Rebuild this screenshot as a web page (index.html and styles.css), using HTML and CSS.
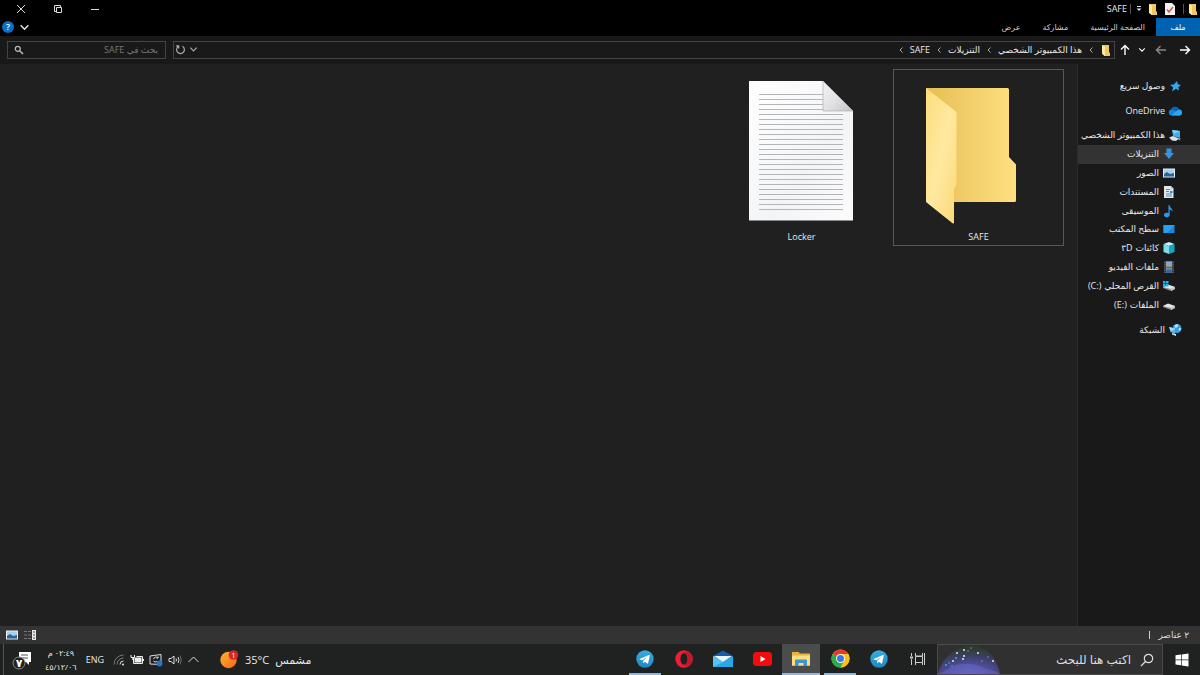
FILE: index.html
```html
<!DOCTYPE html>
<html lang="ar" dir="rtl">
<head>
    <meta charset="UTF-8">
    <meta name="viewport" content="width=device-width, initial-scale=1.0">
    <title>SAFE</title>
    <link rel="stylesheet" href="styles.css">
</head>
<body>
    <svg class="defs" aria-hidden="true">
        <defs>
            <linearGradient id="folder-back" x1="0" y1="0" x2="1" y2="0">
                <stop offset="0" stop-color="#e6bd52"/>
                <stop offset=".4" stop-color="#f0cc66"/>
                <stop offset="1" stop-color="#fedf80"/>
            </linearGradient>
            <linearGradient id="folder-front" x1="0" y1="0" x2="1" y2="1">
                <stop offset="0" stop-color="#fddd7c"/>
                <stop offset=".5" stop-color="#ffe9a0"/>
                <stop offset="1" stop-color="#fbd878"/>
            </linearGradient>
            <linearGradient id="paper" x1="0" y1="0" x2="1" y2="1">
                <stop offset="0" stop-color="#ffffff"/>
                <stop offset=".6" stop-color="#f3f4f6"/>
                <stop offset="1" stop-color="#fbfbfc"/>
            </linearGradient>
            <linearGradient id="fold" x1="0" y1="0" x2="1" y2="1">
                <stop offset="0" stop-color="#f2f2f3"/>
                <stop offset=".5" stop-color="#e3e3e5"/>
                <stop offset="1" stop-color="#c4c4c6"/>
            </linearGradient>
            <linearGradient id="sun" x1="0" y1="0" x2="1" y2="1">
                <stop offset="0" stop-color="#ffb52e"/>
                <stop offset="1" stop-color="#f4661b"/>
            </linearGradient>
            <linearGradient id="sky" x1="0" y1="0" x2="0" y2="1">
                <stop offset="0" stop-color="#37aee2"/>
                <stop offset="1" stop-color="#1e88c0"/>
            </linearGradient>
            <radialGradient id="glow" cx=".5" cy="1" r=".9">
                <stop offset="0" stop-color="#6d63c8"/>
                <stop offset=".45" stop-color="#4a4a92"/>
                <stop offset=".75" stop-color="#3f3f68" stop-opacity=".85"/>
                <stop offset="1" stop-color="#2f5b45" stop-opacity=".2"/>
            </radialGradient>
            <pattern id="rules" width="84" height="5" patternUnits="userSpaceOnUse">
                <path d="M0 2.500h84" stroke="#b4b5b8"/>
            </pattern>
            <symbol id="i-folder" viewBox="0 0 12 14">
                <path d="M2 2h7v7l1 1v3H4z" fill="#f0ca60"/>
                <path d="M2 2l3 2v9l-3-2z" fill="#ffe9a4"/>
            </symbol>
            <symbol id="i-chevron" viewBox="0 0 10 10">
                <path d="M1.500 3l3.500 3.500L8.500 3" fill="none" stroke="currentColor" stroke-width="1.300"/>
            </symbol>
            <symbol id="i-crumb" viewBox="0 0 6 8">
                <path d="M4.500 1.500L2 4l2.500 2.500" fill="none" stroke="currentColor"/>
            </symbol>
            <symbol id="i-arrow" viewBox="0 0 12 12">
                <path d="M1 6h9.500M6.500 2l4 4-4 4" fill="none" stroke="currentColor" stroke-width="1.400"/>
            </symbol>
            <symbol id="i-drive" viewBox="0 0 14 14">
                <path d="M1 8l5-2 7 2v2l-4 2-8-3z" fill="#8d9092"/>
                <path d="M1 8l5-2.500L13 8l-4 2z" fill="#e4e6e8"/>
                <path d="M9 10l4-2v2l-4 2z" fill="#c2c6c8"/>
            </symbol>
            <symbol id="i-picture" viewBox="0 0 14 12">
                <path d="M1 1.500h12v9H1z" fill="#e9eef2"/>
                <path d="M2 2.500h10v7H2z" fill="#9fd2f4"/>
                <path d="M2 7l3-2 3 2 4-1v3.500H2z" fill="#35618c"/>
            </symbol>
            <symbol id="i-telegram" viewBox="0 0 18 18">
                <circle cx="9" cy="9" r="8.700" fill="url(#sky)"/>
                <path d="M3.600 8.900l9.400-3.800c.5-.2.8.1.7.7l-1.500 7.300c-.1.6-.5.700-1 .4l-2.300-1.700-1.200 1.100c-.3.300-.6.100-.6-.2l.2-2 3.900-3.600-4.900 3.100-2.500-.8c-.5-.1-.5-.4-.2-.5z" fill="#fff"/>
            </symbol>
        </defs>
    </svg>

    <header class="title-bar">
        <svg class="folder-icon"><use href="#i-folder"/></svg>
        <span class="divider"></span>
        <button class="quick-button" aria-label="خصائص">
            <svg width="12" height="14" viewBox="0 0 12 14"><path d="M1 1h7l3 3v9H1z" fill="#f3f1f1"/><path d="M3 7.500l2 2.500 4-5" fill="none" stroke="#c8604f" stroke-width="1.500"/></svg>
        </button>
        <button class="quick-button" aria-label="مجلد جديد"><svg class="folder-icon"><use href="#i-folder"/></svg></button>
        <button class="quick-button quick-more" aria-label="تخصيص">
            <svg width="6" height="6" viewBox="0 0 6 6"><path d="M1 .5h4" stroke="#ddd"/><path d="M.5 2.500h5L3 5z" fill="#ddd"/></svg>
        </button>
        <span class="divider"></span>
        <h1 class="window-title">SAFE</h1>
        <div class="window-controls">
            <button aria-label="تصغير"><svg width="10" height="10" viewBox="0 0 10 10"><path d="M1 5.500h8" stroke="#ddd"/></svg></button>
            <button aria-label="استعادة"><svg width="10" height="10" viewBox="0 0 10 10" fill="none" stroke="#ddd"><path d="M3.500 3.500h5v5h-5z"/><path d="M1.500 7.500v-6h6v2M1.500 7.500h2"/></svg></button>
            <button aria-label="إغلاق"><svg width="10" height="10" viewBox="0 0 10 10"><path d="M1 1l8 8M9 1L1 9" stroke="#ddd"/></svg></button>
        </div>
    </header>

    <nav class="ribbon">
        <button class="tab tab-file">ملف</button>
        <button class="tab">الصفحة الرئيسية</button>
        <button class="tab">مشاركة</button>
        <button class="tab">عرض</button>
        <div class="ribbon-end">
            <button aria-label="توسيع الشريط"><svg width="11" height="11"><use href="#i-chevron"/></svg></button>
            <button class="help" aria-label="تعليمات">?</button>
        </div>
    </nav>

    <div class="address-row">
        <div class="history">
            <button aria-label="رجوع"><svg width="12" height="12"><use href="#i-arrow"/></svg></button>
            <button class="forward" aria-label="للأمام"><svg class="flip" width="12" height="12"><use href="#i-arrow"/></svg></button>
            <button class="recent" aria-label="المواقع الأخيرة"><svg width="8" height="8"><use href="#i-chevron"/></svg></button>
            <button aria-label="لأعلى"><svg class="up" width="12" height="12"><use href="#i-arrow"/></svg></button>
        </div>
        <div class="address-box">
            <svg class="folder-icon"><use href="#i-folder"/></svg>
            <svg class="crumb"><use href="#i-crumb"/></svg>
            <a href="#">هذا الكمبيوتر الشخصي</a>
            <svg class="crumb"><use href="#i-crumb"/></svg>
            <a href="#">التنزيلات</a>
            <svg class="crumb"><use href="#i-crumb"/></svg>
            <a href="#">SAFE</a>
            <svg class="crumb"><use href="#i-crumb"/></svg>
            <div class="address-end">
                <button aria-label="المواقع السابقة"><svg width="9" height="9"><use href="#i-chevron"/></svg></button>
                <button aria-label="تحديث"><svg width="11" height="11" viewBox="0 0 11 11" fill="none" stroke="currentColor" stroke-width="1.200"><path d="M3.500 2.300a3.900 3.900 0 1 0 4 0M3.700 4.500V1.900H1.200"/></svg></button>
            </div>
        </div>
        <label class="search-box">
            <input type="text" placeholder="بحث في SAFE" aria-label="بحث في SAFE">
            <svg width="10" height="10" viewBox="0 0 10 10" fill="none" stroke="#bbb"><circle cx="3.800" cy="3.800" r="2.500" stroke-width="1.200"/><path d="M5.700 5.700L9 9" stroke-width="1.600"/></svg>
        </label>
    </div>

    <div class="content">
        <aside class="sidebar">
            <a class="place" href="#">
                <svg width="14" height="14" viewBox="0 0 14 14"><path d="M9 2l.8 3.300 3.200.7-2.600 2 .6 3.500-3-1.700L4 12.500l1.200-4L2 5.800l3.900-.3z" fill="#35a7ef"/></svg>
                وصول سريع
            </a>
            <a class="place" href="#">
                <svg width="14" height="14" viewBox="0 0 14 14"><path d="M3.500 11.500A3 3 0 0 1 3 5.600 4.300 4.300 0 0 1 11 5.500a3 3 0 0 1 .5 6z" fill="#1684d8"/><path d="M3.500 11.500L8 7.300a3 3 0 0 1 5.800.8c.3 2-1 3.400-2.800 3.400z" fill="#2ba6ee"/><path d="M3 5.600A4.300 4.300 0 0 1 11 5.500L8 7.300z" fill="#0c63b4"/></svg>
                <span>OneDrive</span>
            </a>
            <div class="computer">
                <a class="place" href="#">
                    <svg width="14" height="14" viewBox="0 0 14 14"><path d="M4 2l8 1v7L5 8z" fill="#3cb1f2"/><path d="M4 2l8 1-6 3z" fill="#7fd1fa"/><path d="M1 9.500L5 8l6 2.500-3 2.500-4-.5z" fill="#d9e2e8"/><path d="M10 10l3 .8-2 1.700z" fill="#9fb2be"/></svg>
                    هذا الكمبيوتر الشخصي
                </a>
                <a class="place nested selected" href="#">
                    <svg width="14" height="14" viewBox="0 0 14 14"><path d="M4.500 1.500h5V6H12l-5 6-5-6h2.500z" fill="#3793e0"/></svg>
                    التنزيلات
                </a>
                <a class="place nested" href="#"><svg width="14" height="12"><use href="#i-picture"/></svg>الصور</a>
                <a class="place nested" href="#">
                    <svg width="14" height="14" viewBox="0 0 14 14"><path d="M2 1h7l2.500 2.500V13H2z" fill="#dfe8ee"/><path d="M9 1v2.500h2.500z" fill="#9db4c2"/><path d="M4 4.500h4M4 6.500h3M4 9h6M4 11h6" stroke="#5f8eac"/><path d="M8 6h2.500v2H8z" fill="#3384c4"/></svg>
                    المستندات
                </a>
                <a class="place nested" href="#">
                    <svg width="14" height="14" viewBox="0 0 14 14"><path d="M6.500 1h1c.3 2.500 3.500 3.500 3.200 7-.5-1.500-1.700-2.300-3-2.500V11a2.900 2.300 0 1 1-1.200-1.900z" fill="#259cf0"/></svg>
                    الموسيقى
                </a>
                <a class="place nested" href="#">
                    <svg width="14" height="14" viewBox="0 0 14 14"><path d="M1.500 3h11v8h-11z" fill="#1688e4"/><path d="M1.500 3h11L5 11H1.500z" fill="#27a0f3"/></svg>
                    سطح المكتب
                </a>
                <a class="place nested" href="#">
                    <svg width="14" height="14" viewBox="0 0 14 14"><path d="M7 1l5.500 2L7 5 1.500 3z" fill="#c8f3fa"/><path d="M1.500 3L7 5v8l-5.500-2z" fill="#7edbeb"/><path d="M7 5l5.500-2v8L7 13z" fill="#18a5c1"/></svg>
                    كائنات <bdi dir="ltr">٣D</bdi>
                </a>
                <a class="place nested" href="#">
                    <svg width="14" height="14" viewBox="0 0 14 14"><path d="M2 1h10v12H2z" fill="#50545c"/><path d="M4 1.500h6v5H4z" fill="#7aa8ee"/><path d="M4 7.500h6v5H4z" fill="#6688a0"/><path d="M4 4l3 1 3-2v3.500H4z" fill="#bba24d"/><path d="M4 10.500l3-1 3 1v2H4z" fill="#3564a8"/><path d="M3 1v12M11 1v12" stroke="#222" stroke-dasharray="1 1"/></svg>
                    ملفات الفيديو
                </a>
                <a class="place nested" href="#">
                    <svg width="14" height="14" viewBox="0 0 14 14"><use href="#i-drive"/><path d="M1 2h2.500v2.500H1zM4 2h2.500v2.500H4zM1 5h2.500v2.500H1zM4 5h2.500v2.500H4z" fill="#25b0ef"/></svg>
                    القرص المحلي <bdi dir="ltr">(C:)</bdi>
                </a>
                <a class="place nested" href="#"><svg width="14" height="14"><use href="#i-drive"/></svg>الملفات <bdi dir="ltr">(E:)</bdi></a>
            </div>
            <a class="place" href="#">
                <svg width="14" height="14" viewBox="0 0 14 14"><circle cx="9" cy="5.500" r="4.500" fill="#3e9bd8"/><path d="M6.500 3c1-2 3-2 4-1l-1 2-2 1zM11 5l2 0-1 3-1.500-1z" fill="#b3e3fa"/><path d="M1 4l6 1.500v5L2.500 9z" fill="#57baf0"/><path d="M1 4l6 1.500L3 8z" fill="#a3dcfa"/><path d="M4 10l4 1v2l-4-1.500z" fill="#cfdfe8"/></svg>
                الشبكة
            </a>
        </aside>
        <main class="files">
            <button class="file focused">
                <svg width="144" height="150" viewBox="0 0 144 150">
                    <path d="M19 11h81.500q1.500 0 1.500 1.500V80l7 7.500v36q0 1.500-1.500 1.500H40z" fill="url(#folder-back)"/>
                    <path d="M19 11l30.500 24v72.500l-2.500 4v34q0 1.500-1.500.7L19 125z" fill="url(#folder-front)"/>
                </svg>
                <span>SAFE</span>
            </button>
            <button class="file">
                <svg width="144" height="150" viewBox="1 0 144 150">
                    <path d="M20 4h74l30 30v109.500H20z" fill="url(#paper)"/>
                    <path d="M30 15h64v20h20v98H30z" fill="url(#rules)"/>
                    <path d="M94 4l30 30H94z" fill="url(#fold)" stroke="#a5a5a7" stroke-width=".6"/>
                </svg>
                <span>Locker</span>
            </button>
        </main>
    </div>

    <footer class="status-bar">
        <span>٢ عناصر</span>
        <span class="status-divider"></span>
        <div class="view-modes">
            <button aria-label="تفاصيل"><svg width="12" height="12" viewBox="0 0 12 12"><path d="M0 2.500h7M0 6h7M0 9.500h7" stroke="#777" stroke-dasharray="3 1"/><path d="M8 1h4v10H8z" fill="#e8e8e8"/><path d="M10 2v8" stroke="#555" stroke-dasharray="2 1"/></svg></button>
            <button aria-label="رموز كبيرة"><svg width="14" height="12"><use href="#i-picture"/></svg></button>
        </div>
    </footer>

    <div class="taskbar">
        <button class="start" aria-label="ابدأ">
            <svg width="14" height="14" viewBox="0 0 14 14" fill="#fff"><path d="M.5 2.300L6 1.500v5H.5zM6.700 1.400L13.500.4v6.100H6.700zM.5 7.200H6v5.100l-5.500-.8zM6.700 7.200h6.800v6.200l-6.800-1z"/></svg>
        </button>
        <label class="task-search">
            <svg width="14" height="14" viewBox="0 0 14 14" fill="none" stroke="#ddd" stroke-width="1.200"><circle cx="8.500" cy="5.500" r="4.200"/><path d="M5.500 8.500L1 13"/></svg>
            <input type="text" placeholder="اكتب هنا للبحث" aria-label="اكتب هنا للبحث">
            <svg class="highlight" width="62" height="30" viewBox="0 0 62 30">
                <path d="M0 30C3 16 16 3 32 2s27 12 30 28z" fill="url(#glow)"/>
                <path d="M0 30c10-4 14-9 24-10s17 2 22 4 12 3 16 6z" fill="#6367be" opacity=".6"/>
                <g fill="#d5efe8"><circle cx="26" cy="6" r="1"/><circle cx="19" cy="9" r="1"/><circle cx="15" cy="17" r="1"/><circle cx="26" cy="12" r="1"/><circle cx="40" cy="9" r="1"/><circle cx="55" cy="17" r="1"/><circle cx="25" cy="15" r="1"/><circle cx="33" cy="4" r=".6"/></g>
                <g fill="#49a8dc"><circle cx="8" cy="21" r="1"/><circle cx="11" cy="19" r=".8"/><circle cx="18" cy="14" r="1"/><circle cx="30" cy="7" r=".8"/><circle cx="50" cy="13" r=".8"/><circle cx="44" cy="17" r=".8"/><circle cx="14" cy="22" r=".8"/></g>
            </svg>
        </label>
        <div class="apps">
            <button class="app" aria-label="عرض المهام">
                <svg width="16" height="16" viewBox="0 0 16 16" fill="none" stroke="#ccc"><path d="M5.500 2v3h7V2M5.500 14v-2.500h7V14M5.500 5.500h7v6h-7zM14.500 2v12M1.500 2v3M1.500 8v6"/><path d="M0 6.500h3" stroke-width="2"/></svg>
            </button>
            <button class="app" aria-label="Telegram"><svg width="18" height="18"><use href="#i-telegram"/></svg></button>
            <button class="app running" aria-label="Chrome">
                <svg width="19" height="19" viewBox="0 0 20 20"><circle cx="10" cy="10" r="9.500" fill="#fbc117"/><path d="M10 10L1.800 5.200a9.500 9.500 0 0 1 16.400 0z" fill="#e33b2e"/><path d="M10 10L1.800 5.200A9.500 9.500 0 0 0 10 19.500l4-7.200z" fill="#2da94f"/><path d="M10 5.300h8.300a9.500 9.500 0 0 1-8.300 14.200l4-7.200z" fill="#fbc117"/><circle cx="10" cy="10" r="4.700" fill="#fff"/><circle cx="10" cy="10" r="3.700" fill="#3878e8"/></svg>
            </button>
            <button class="app running active" aria-label="مستكشف الملفات">
                <svg width="18" height="16" viewBox="0 0 18 16"><path d="M0 1h6.500L8 2.500h10V15H0z" fill="#e9b33c"/><path d="M0 4.500h18V14H0z" fill="#ffdc7c"/><path d="M3 15V9.500q0-1 1-1h10q1 0 1 1V15h-3.500v-3h-5v3z" fill="#3f94d4"/></svg>
            </button>
            <button class="app" aria-label="YouTube">
                <svg width="19" height="14" viewBox="0 0 19 14"><rect width="19" height="14" rx="3.500" fill="#f50b0b"/><path d="M7.500 4l5 3-5 3z" fill="#fff"/></svg>
            </button>
            <button class="app" aria-label="البريد">
                <svg width="20" height="18" viewBox="0 0 20 18"><path d="M0 6l10-5.500L20 6v11H0z" fill="#1360a8"/><path d="M0 6l10 6L20 6v11H0z" fill="#29a8e8"/><path d="M0 6l10 6-10 5z" fill="#53c4f4"/><path d="M1 6h18l-9 6z" fill="#eef3f6"/></svg>
            </button>
            <button class="app" aria-label="Opera">
                <svg width="18" height="18" viewBox="0 0 18 18"><path fill-rule="evenodd" d="M9 .3a8.700 8.700 0 1 0 0 17.400A8.700 8.700 0 0 0 9 .3zm0 3c2.200 0 3.500 2.500 3.500 5.700s-1.300 5.700-3.500 5.700S5.500 12.200 5.500 9 6.800 3.300 9 3.300z" fill="#ea2034"/><path d="M9 3.300C11 .8 14 1 15.500 3.200a8.700 8.700 0 0 1 0 11.600C14 17 11 17.200 9 14.700c2.200 0 3.500-2.500 3.500-5.700S11.200 3.300 9 3.300z" fill="#c2182b"/></svg>
            </button>
            <button class="app running" aria-label="Telegram"><svg width="18" height="18"><use href="#i-telegram"/></svg></button>
        </div>
        <div class="weather">
            <span>مشمس</span>
            <span>35°C</span>
            <svg width="19" height="19" viewBox="0 0 19 19"><circle cx="8.500" cy="10" r="8.200" fill="url(#sun)"/><circle cx="13.500" cy="5" r="4.800" fill="#d4262c"/><text x="13.500" y="8" class="badge">1</text></svg>
        </div>
        <div class="tray">
            <button aria-label="إظهار الرموز المخفية"><svg class="tray-up" width="13" height="13" viewBox="0 0 13 13"><path d="M1.500 4l5 5 5-5" fill="none" stroke="#ddd"/></svg></button>
            <svg width="14" height="12" viewBox="0 0 14 12" fill="none" stroke="#eee" stroke-width=".9"><path d="M1 4.500h2L6 2v8L3 7.500H1z"/><path d="M8 4.500q1 1.500 0 3M10 3q2 3 0 6"/><path d="M12 1.500q2.700 4.500 0 9" stroke="#777"/></svg>
            <svg width="14" height="14" viewBox="0 0 14 14" fill="none" stroke="#ddd"><path d="M1 3l11-1.500v10L1 11z"/><path d="M9 5a2.600 2.600 0 0 0-4.500 1M9 3.500V5H7.500M4.500 8A2.600 2.600 0 0 0 8 8.500"/><circle cx="10.500" cy="10.500" r="3" fill="#2276d2" stroke="none"/></svg>
            <svg width="14" height="12" viewBox="0 0 14 12"><path d="M4.500 3.500h7v5h-7z" fill="#eee"/><path d="M3.500 3v6.500h9V2.500h-6" fill="none" stroke="#eee"/><path d="M13.500 5v2M1 1v2.500h3.500V1M2.800 3.500V6" fill="none" stroke="#eee"/></svg>
            <svg width="12" height="12" viewBox="0 0 12 12" fill="none" stroke="#777"><path d="M1 10.500A9.500 9.500 0 0 1 10.500 1M4 10.500A6.500 6.500 0 0 1 10.500 4"/><path d="M7 10.500A3.500 3.500 0 0 1 10.500 7" stroke="#ddd"/><circle cx="10" cy="10.500" r="1" fill="#eee" stroke="none"/></svg>
            <span class="language">ENG</span>
            <div class="clock">
                <span>٠٢:٤٩ م</span>
                <span>٤٥/١٢/٠٦</span>
            </div>
            <button class="notifications" aria-label="الإشعارات">
                <svg width="20" height="20" viewBox="0 0 20 20"><path d="M7 2h12v10h-2v3l-3-3H7z" fill="#fff"/><path d="M9 5h7M9 8h7" stroke="#555"/><circle cx="7" cy="13" r="6" fill="#222" stroke="#888"/><text x="7" y="17" class="badge badge-count">٧</text></svg>
            </button>
        </div>
    </div>
</body>
</html>
```
FILE: styles.css
```css
* {
    box-sizing: border-box;
}
body {
    margin: 0;
    min-height: 100vh;
    display: flex;
    flex-direction: column;
    background: #202020;
    color: #e8e8e8;
    font-family: "Open Sans", "DejaVu Sans", sans-serif;
    font-size: 9px;
    line-height: 14px;
}
svg {
    display: block;
    flex: none;
}
.defs {
    position: absolute;
    width: 0;
    height: 0;
}
button {
    display: flex;
    align-items: center;
    justify-content: center;
    padding: 0;
    border: 0;
    background: none;
    color: inherit;
    font: inherit;
}
a {
    color: inherit;
    text-decoration: none;
}
input {
    min-width: 0;
    flex: 1;
    padding: 0;
    border: 0;
    outline: 0;
    background: none;
    color: inherit;
    font: inherit;
}
.folder-icon {
    width: 12px;
    height: 14px;
}

/* title bar */
.title-bar {
    display: flex;
    align-items: center;
    height: 18px;
    padding-right: 1px;
    background: #000;
}
.divider {
    width: 1px;
    height: 10px;
    margin: 0 3px;
    background: #555;
}
.quick-button {
    width: 17px;
}
.title-bar .quick-button:first-of-type {
    margin-right: 2px;
}
.quick-more {
    width: 10px;
}
.window-title {
    margin: 0;
    font-size: 9px;
    font-weight: 400;
}
.window-controls {
    display: flex;
    margin-right: auto;
    padding-left: 2px;
}
.window-controls button {
    width: 37px;
    height: 18px;
}

/* ribbon */
.ribbon {
    display: flex;
    height: 18px;
    background: #000;
    font-size: 8px;
}
.tab {
    padding: 0 11px;
    color: #ccc;
}
.tab-file {
    width: 44px;
    background: #0063b1;
    color: #fff;
}
.ribbon-end {
    display: flex;
    align-items: center;
    gap: 5px;
    margin-right: auto;
    padding-left: 2px;
}
.help {
    width: 12px;
    height: 12px;
    border-radius: 50%;
    background: #0a6fc9;
    color: #fff;
    font-size: 9px;
    font-weight: 600;
}

/* address row */
.address-row {
    display: flex;
    align-items: center;
    gap: 7px;
    height: 28px;
    padding: 0 9px 1px 7px;
    background: #191919;
}
.history {
    display: flex;
    align-items: center;
    gap: 12px;
    margin-left: -3px;
    color: #fff;
}
.history .forward {
    color: #888;
}
.history .recent {
    margin: 0 -3px 0 -5px;
}
.flip {
    transform: scaleX(-1);
}
.up {
    transform: rotate(-90deg);
}
.address-box {
    display: flex;
    flex: 1;
    align-items: center;
    gap: 6px;
    height: 18px;
    padding: 0 2px 0 1px;
    border: 1px solid #444;
}
.crumb {
    width: 6px;
    height: 8px;
    color: #aaa;
}
.address-end {
    display: flex;
    gap: 3px;
    margin-right: auto;
    color: #aaa;
}
.search-box {
    display: flex;
    align-items: center;
    width: 159px;
    height: 18px;
    padding: 0 7px 0 6px;
    border: 1px solid #444;
}
.search-box input::placeholder {
    color: #777;
    opacity: 1;
}

/* content */
.content {
    display: flex;
    flex: 1;
}
.sidebar {
    display: flex;
    flex-direction: column;
    gap: 6px;
    width: 123px;
    padding-top: 12px;
    border-left: 1px solid #2b2b2b;
    background: #191919;
}
.place {
    display: flex;
    align-items: center;
    gap: 3px;
    height: 19px;
    padding-right: 18px;
    white-space: nowrap;
}
.computer {
    display: grid;
    grid-auto-rows: 1fr;
    height: 188px;
}
.computer .place {
    height: auto;
}
.place.nested {
    padding-right: 24px;
}
.selected {
    background: #333;
}
.files {
    display: flex;
    flex: 1;
    flex-wrap: wrap;
    align-content: flex-start;
    gap: 6px;
    padding: 5px 13px;
}
.file {
    flex-direction: column;
    justify-content: flex-start;
    gap: 3px;
    width: 171px;
    height: 177px;
    padding-top: 7px;
    border: 1px solid transparent;
}
.focused {
    border-color: #585858;
}

/* status bar */
.status-bar {
    display: flex;
    align-items: center;
    gap: 8px;
    height: 18px;
    padding: 0 11px 0 5px;
    background: #333;
    color: #ddd;
}
.status-divider {
    width: 1px;
    height: 8px;
    background: #ccc;
}
.view-modes {
    display: flex;
    gap: 5px;
    margin-right: auto;
}

/* taskbar */
.taskbar {
    display: flex;
    align-items: stretch;
    height: 31px;
    padding-left: 3px;
    background: #202222;
    font-size: 11px;
}
.start {
    width: 37px;
}
.task-search {
    display: flex;
    align-items: center;
    gap: 9px;
    width: 226px;
    padding-right: 8px;
    overflow: hidden;
    border: 1px solid #4a4a4a;
    background: #303030;
    font-size: 12px;
}
.task-search input::placeholder {
    color: #ddd;
    opacity: 1;
}
.highlight {
    align-self: flex-end;
}
.apps {
    display: flex;
    gap: 1px;
}
.app {
    width: 38px;
    border-bottom: 2px solid transparent;
}
.running {
    background: linear-gradient(#8ab8e0, #8ab8e0) bottom / 32px 2px no-repeat border-box;
}
.active {
    border-bottom-color: #8ab8e0;
    background: #4b4d4d;
}
.weather {
    display: flex;
    align-items: center;
    gap: 6px;
    margin-right: auto;
}
.badge {
    fill: #fff;
    font-size: 8px;
    text-anchor: middle;
}
.badge-count {
    font-size: 11px;
    font-weight: 700;
}
.tray {
    display: flex;
    align-items: center;
    gap: 5px;
    margin-right: 20px;
    border-left: 1px solid #555;
}
.tray-up {
    transform: rotate(180deg);
}
.language {
    margin: 0 4px;
    font-size: 9px;
}
.clock {
    display: flex;
    flex-direction: column;
    align-items: center;
    font-size: 8px;
}
.notifications {
    width: 36px;
}
```
